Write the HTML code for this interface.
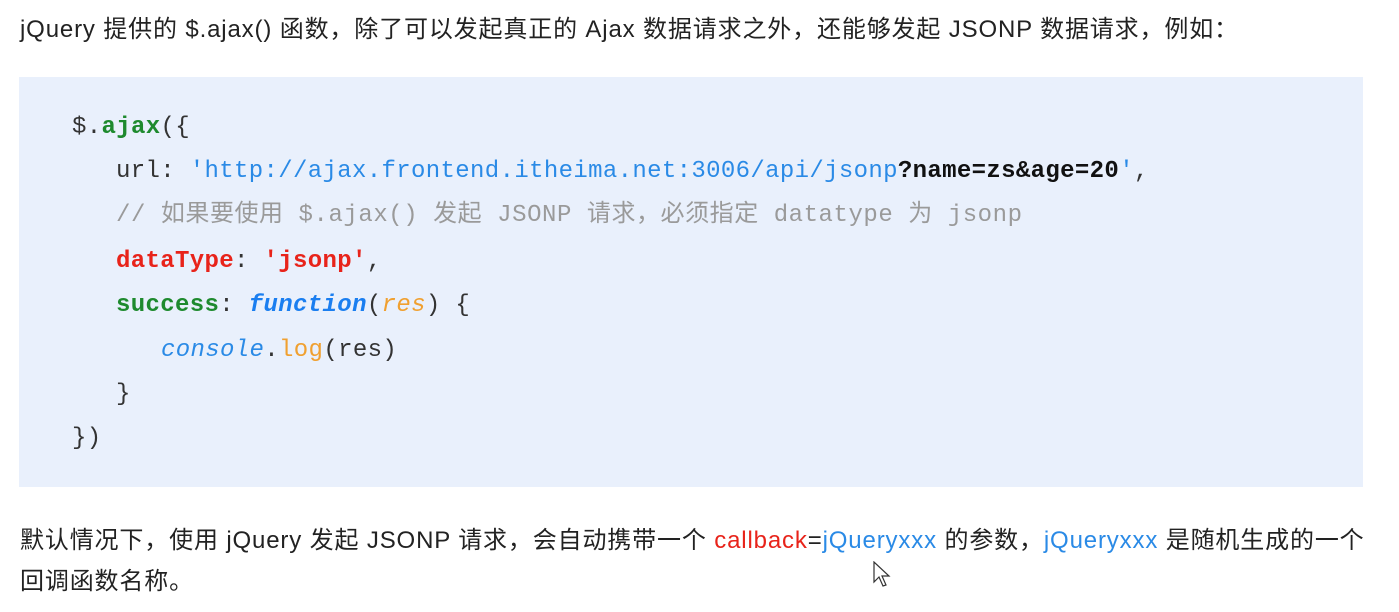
<!DOCTYPE html>
<html><head><meta charset="utf-8"><style>
body{margin:0;width:1399px;height:612px;background:#fff;position:relative;overflow:hidden;font-family:"Liberation Sans","Noto Sans CJK SC",sans-serif;color:#222}
.p{position:absolute;left:20px;font-size:24px;letter-spacing:0.85px;white-space:nowrap;line-height:30px}
.box{position:absolute;left:19px;top:77px;width:1344px;height:410px;background:#e9f0fc}
.c{position:absolute;font-family:"Liberation Mono","Noto Sans CJK SC",monospace;font-size:24px;letter-spacing:0.35px;white-space:nowrap;color:#333;line-height:28px}
.g{color:#1e8a2e;font-weight:bold}.b{color:#2a8ae6}.k{color:#111;font-weight:bold}.cm{color:#9a9a9a;letter-spacing:0.55px}
.r{color:#e8231a;font-weight:bold}.f{color:#1a7ef0;font-weight:bold;font-style:italic}.o{color:#f0a030;font-style:italic}
.bi{color:#2a8ae6;font-style:italic}.ol{color:#f0a030}
</style></head><body>
<div class="p" style="top:15px">jQuery 提供的 $.ajax() 函数，除了可以发起真正的 Ajax 数据请求之外，还能够发起 JSONP 数据请求，例如：</div>
<div class="box"></div>
<div class="c" style="left:72px;top:114px">$.<span class="g">ajax</span>({</div>
<div class="c" style="left:116px;top:158px">url: <span class="b">'http://ajax.frontend.itheima.net:3006/api/jsonp</span><span class="k">?name=zs&amp;age=20</span><span class="b">'</span>,</div>
<div class="c cm" style="left:116px;top:202px">// 如果要使用 $.ajax() 发起 JSONP 请求，必须指定 datatype 为 jsonp</div>
<div class="c" style="left:116px;top:248px"><span class="r">dataType</span>: <span class="r">'jsonp'</span>,</div>
<div class="c" style="left:116px;top:292px"><span class="g">success</span>: <span class="f">function</span>(<span class="o">res</span>) {</div>
<div class="c" style="left:161px;top:337px"><span class="bi">console</span>.<span class="ol">log</span>(res)</div>
<div class="c" style="left:116px;top:381px">}</div>
<div class="c" style="left:72px;top:425px">})</div>
<div class="p" style="top:526px">默认情况下，使用 jQuery 发起 JSONP 请求，会自动携带一个 <span style="color:#e8231a">callback</span>=<span style="color:#2a8ae6">jQueryxxx</span> 的参数，<span style="color:#2a8ae6">jQueryxxx</span> 是随机生成的一个</div>
<div class="p" style="top:567px">回调函数名称。</div>
<svg style="position:absolute;left:873px;top:561px" width="18" height="28" viewBox="0 0 18 28"><path d="M1 1 L1 21 L6 16 L10 25 L13 24 L9 15 L16 15 Z" fill="#fff" stroke="#333" stroke-width="1.2"/></svg>
</body></html>
